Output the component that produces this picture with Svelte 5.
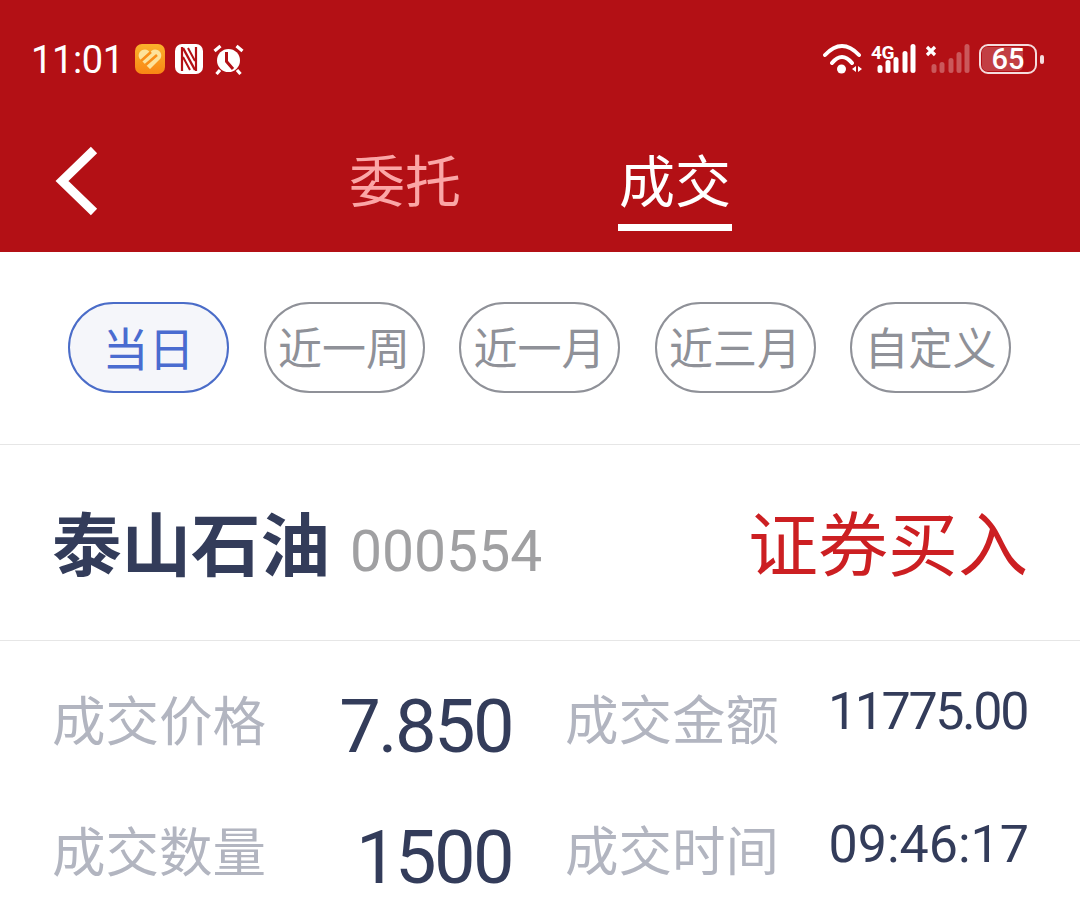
<script>
  const filters = ['当日', '近一周', '近一月', '近三月', '自定义'];
  const bars1 = [[5, 8], [13, 13], [21, 16], [30, 22], [38, 29]];
  const bars2 = [[5, 9], [13, 11], [22, 15], [30, 21], [38, 29]];
</script>

<div class="page">
  <header class="head">
    <div class="status">
      <div class="left">
        <span class="time">11:01</span>
        <svg class="ico" width="30" height="30" viewBox="0 0 30 30">
          <defs><linearGradient id="g" x1="0" y1="0" x2="0" y2="1"><stop offset="0" stop-color="#fbb22c"/><stop offset="1" stop-color="#f98614"/></linearGradient></defs>
          <rect width="30" height="30" rx="7" fill="url(#g)"/>
          <path d="M15 25 L4.500 14.500 C2 10 5.500 5.500 10 5.500 C12.500 5.500 14 7 15 8.500 C16 7 17.500 5.500 20 5.500 C24.500 5.500 28 10 25.500 14.500 Z" fill="#fde29a"/>
          <path d="M6 17 L16 8 M10.500 21 L22 11" stroke="#f98f18" stroke-width="2.600"/>
        </svg>
        <svg class="ico" width="28" height="30" viewBox="0 0 28 30">
          <rect width="28" height="30" rx="7" fill="#fff"/>
          <path d="M7 3 V27 M21 3 V27" stroke="#b31015" stroke-width="2.200" fill="none"/>
          <path d="M8 4 L20 26" stroke="#b31015" stroke-width="2.400" fill="none"/>
          <path d="M13 4 L20 17 M8 13 L15 26" stroke="#b31015" stroke-width="2" fill="none"/>
        </svg>
        <svg class="ico" width="31" height="31" viewBox="0 0 31 31">
          <circle cx="15.500" cy="16.500" r="11.500" fill="#fff"/>
          <path d="M1.500 7 L7.500 2 M29.500 7 L23.500 2 M7 26 L3.500 30 M24 26 L27.500 30" stroke="#fff" stroke-width="3.200"/>
          <path d="M13.500 8 V17.500 L20 25" stroke="#b31015" stroke-width="3" fill="none"/>
        </svg>
      </div>
      <div class="right">
        <svg class="wifi" width="40" height="32" viewBox="0 0 40 32">
          <path d="M2 12 Q19 -6 36 12 M9 20 Q19 8 29 20" stroke="#fff" stroke-width="4" fill="none" stroke-linecap="round"/>
          <circle cx="18.500" cy="26" r="4.500" fill="#fff"/>
          <path d="M29 26 L33 23 V29 Z M35 23 L39 26 L35 29 Z" fill="#fff"/>
        </svg>
        <div class="sig">
          <span class="g4">4G</span>
          <svg width="46" height="32" viewBox="0 0 46 32">
            {#each bars1 as [x, h]}
              <rect x={x - 2.5} y={30 - h} width="5" height={h} rx="2.500" fill="#fff"/>
            {/each}
          </svg>
        </div>
        <div class="sig second">
          <svg width="46" height="32" viewBox="0 0 46 32">
            <path d="M-2 4 L6 12 M6 4 L-2 12" stroke="#fff" stroke-width="3.200"/>
            {#each bars2 as [x, h]}
              <rect x={x - 2.5} y={30 - h} width="5" height={h} rx="2.500" fill="#fff" opacity=".3"/>
            {/each}
          </svg>
        </div>
        <div class="batt">
          <div class="shell"><div class="fill"></div><span>65</span></div>
          <i></i>
        </div>
      </div>
    </div>
    <nav class="nav">
      <svg class="back" width="44" height="72" viewBox="0 0 44 72">
        <path d="M39 5 L7 36 L39 67" stroke="#fff" stroke-width="9" fill="none"/>
      </svg>
      <div class="tab dim">委托</div>
      <div class="tab on">成交</div>
    </nav>
  </header>

  <section class="filters">
    {#each filters as f, i}
      <button class:active={i === 0}>{f}</button>
    {/each}
  </section>

  <section class="title">
    <div><b>泰山石油</b><span class="code">000554</span></div>
    <div class="kind">证券买入</div>
  </section>

  <section class="grid">
    <div class="lab">成交价格</div><div class="big">7.850</div><div class="lab r">成交金额</div><div class="small tight">11775.00</div>
    <div class="lab">成交数量</div><div class="big">1500</div><div class="lab r">成交时间</div><div class="small">09:46:17</div>
  </section>
</div>

<style>
  :global(body) { margin: 0; background: #fff; }
  .page { width: 1080px; height: 917px; overflow: hidden; font-family: "Roboto", "Noto Sans CJK SC", sans-serif; background: #fff; }
  .head { height: 252px; background: #b31015; color: #fff; }
  .status { height: 118px; display: flex; justify-content: space-between; align-items: flex-start; padding: 40px 36px 0 31px; box-sizing: border-box; }
  .left { display: flex; align-items: center; gap: 10px; height: 38px; }
  .time { font-size: 38px; font-weight: 400; letter-spacing: -.4px; margin: 2px 1px 0 0; line-height: 38px; }
  .right { display: flex; align-items: center; height: 38px; }
  .sig { position: relative; width: 46px; height: 32px; margin-left: 12px; }
  .sig svg { display: block; overflow: visible; }
  .g4 { position: absolute; left: -4px; top: 0; font-size: 19px; font-weight: 700; line-height: 19px; letter-spacing: -.5px; }
  .second { margin-left: 8px; }
  .batt { display: flex; align-items: center; gap: 3px; margin-left: 4px; }
  .shell { position: relative; width: 58px; height: 30px; border: 2.500px solid #f5dcdd; border-radius: 9px; box-sizing: border-box; display: flex; align-items: center; justify-content: center; }
  .fill { position: absolute; inset: 1px auto 1px 1px; width: 41px; background: rgba(255,255,255,.2); border-radius: 5px; }
  .shell span { position: relative; font-size: 29px; font-weight: 500; line-height: 25px; }
  .batt i { width: 4px; height: 9px; background: #f5dcdd; border-radius: 2px; }
  .nav { position: relative; height: 134px; display: flex; justify-content: center; gap: 156px; }
  .back { position: absolute; left: 55px; top: 27px; width: 44px; height: 72px; }
  .tab { font-size: 56px; line-height: 70px; height: 113px; width: 114px; text-align: center; padding-top: 30px; box-sizing: border-box; white-space: nowrap; }
  .dim { color: #fba6a6; }
  .on { border-bottom: 7px solid #fff; }
  .filters { height: 193px; box-sizing: border-box; border-bottom: 1px solid #e6e6e6; display: flex; gap: 34.500px; padding: 50px 68px 0; }
  button { width: 161px; height: 91px; box-sizing: border-box; border-radius: 46px; border: 2px solid #8f9198; background: #fff; color: #8f9198; font: inherit; font-size: 44px; padding: 0 0 3px; white-space: nowrap; }
  button.active { border-color: #4a6cc8; background: #f5f6fa; color: #4a6cd0; font-size: 46px; }
  .title { height: 196px; box-sizing: border-box; border-bottom: 1px solid #e6e6e6; display: flex; justify-content: space-between; align-items: center; padding: 0 52px 4px; }
  .title b { font-size: 69.500px; color: #333c5a; font-weight: 700; }
  .code { font-size: 57px; color: #a0a0a2; margin-left: 20px; }
  .kind { font-size: 70px; color: #cc1f22; }
  .grid { display: grid; grid-template-columns: 225px 235px 53px 225px 239px; grid-template-rows: 131px 131px; padding: 14px 0 0 52px; align-items: center; }
  .grid > :nth-child(4n+3) { grid-column: 4; }
  .lab { font-size: 53.500px; color: #b2b5c0; white-space: nowrap; margin-bottom: 6px; }
  .lab.r { margin-bottom: 8px; }
  .big { font-size: 74px; letter-spacing: -2.600px; color: #333c5a; text-align: right; margin-top: 12px; }
  .small { font-size: 52px; color: #333c5a; text-align: right; margin-bottom: 15px; }
  .tight { letter-spacing: -2.400px; margin: 0 2px 18px 0; }
</style>
